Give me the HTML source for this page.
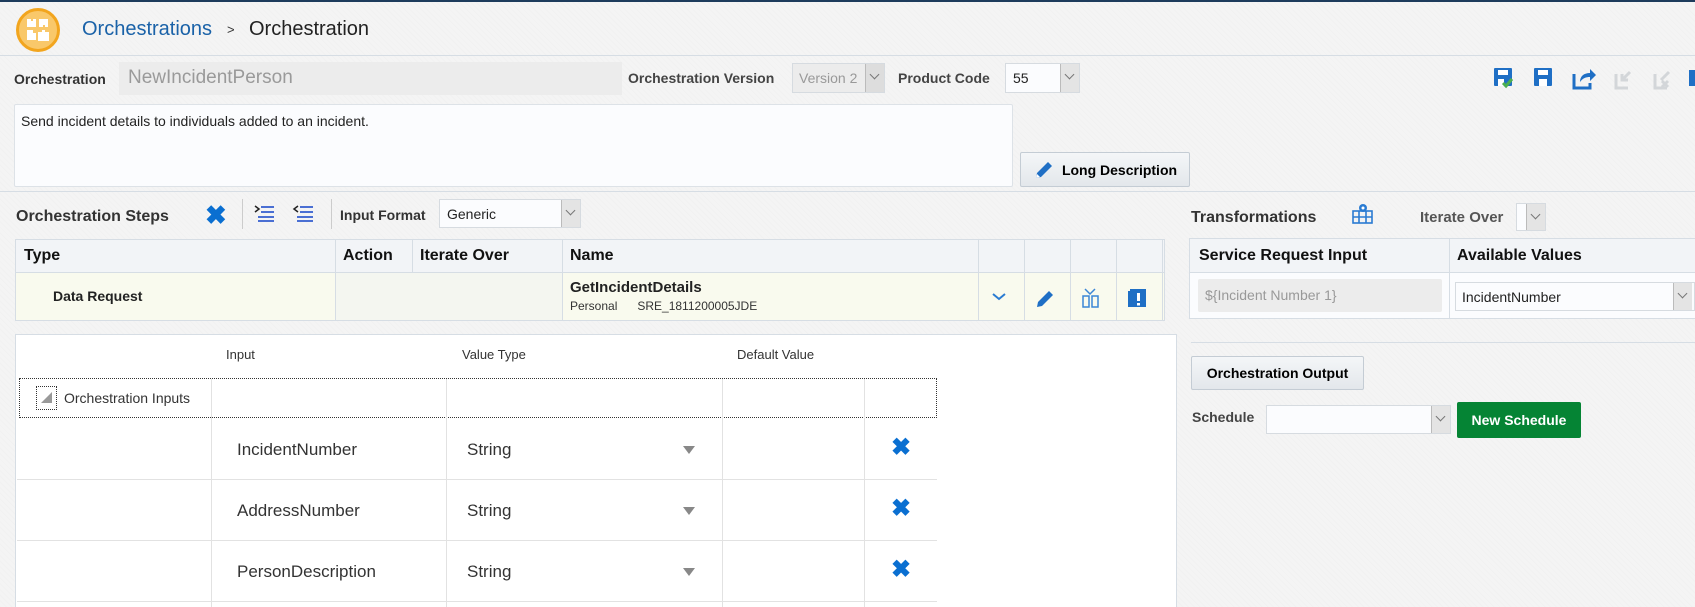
<!DOCTYPE html>
<html style="overflow:hidden;height:607px"><head><meta charset="utf-8"><style>
*{box-sizing:border-box;margin:0;padding:0}
body{width:1695px;height:607px;overflow:hidden;background:#f4f4f4;font-family:"Liberation Sans",Arial,sans-serif;color:#333;position:relative;
background-image:repeating-linear-gradient(45deg,rgba(0,0,0,0.012) 0 1px,transparent 1px 4px)}
.a{position:absolute}
.b{font-weight:bold}
.sel{position:absolute;background:#fbfcfe;border:1px solid #d6dbe0;font-size:14px}
.arr{position:absolute;right:0;top:0;bottom:0;width:19px;background:#e4e4e4;border-left:1px solid #bbb}
.arr:after{content:"";position:absolute;left:5px;top:7px;width:6px;height:6px;border-right:1px solid #777;border-bottom:1px solid #777;transform:rotate(45deg)}
.btn{position:absolute;background:linear-gradient(#f4f6f8,#e3e7eb);border:1px solid #c4ccd4;border-radius:2px;font-weight:bold;font-size:14px;color:#000;display:flex;align-items:center;justify-content:center}
.hl{position:absolute;height:1px;background:#d6dde4}
.vl{position:absolute;width:1px;background:#d6dde4}
.x{position:absolute;color:#0a6fd1;font-weight:bold;font-size:24px;line-height:24px}
</style></head><body>
<div class="a" style="left:0;top:0;width:1695px;height:2px;background:#1d3b5c"></div>
<!-- logo -->
<div class="a" style="left:16px;top:8px;width:44px;height:44px;border-radius:50%;background:#f9c86a;border:3px solid #f2a51e"></div>
<svg class="a" style="left:26px;top:18px" width="24" height="24" viewBox="0 0 24 24" fill="#fff"><path d="M1 1h4v2h2V1h3v8H1z"/><path d="M13 1h9v8h-3v-2h-2v2h-4z"/><path d="M1 12h6v3h3v7H1z"/><path d="M12 14h4v-2h3v2h4v9H12z"/></svg>
<div class="a" style="left:82px;top:18px;font-size:20px;color:#1a62a8">Orchestrations</div>
<div class="a" style="left:227px;top:22px;font-size:13px;color:#333">&gt;</div>
<div class="a" style="left:249px;top:18px;font-size:20px;color:#222">Orchestration</div>
<div class="hl" style="left:0;top:55px;width:1695px"></div>
<!-- row 1 -->
<div class="a b" style="left:14px;top:71px;font-size:14px;color:#333">Orchestration</div>
<div class="a" style="left:119px;top:62px;width:503px;height:33px;background:#ececec;font-size:19px;color:#9a9a9a;padding:5px 9px">NewIncidentPerson</div>
<div class="a b" style="left:628px;top:70px;font-size:14px;color:#444">Orchestration Version</div>
<div class="sel" style="left:792px;top:63px;width:93px;height:30px;background:#ececec;color:#999;padding:6px 6px">Version 2<div class="arr" style="background:#ddd"></div></div>
<div class="a b" style="left:898px;top:70px;font-size:14px;color:#444">Product Code</div>
<div class="sel" style="left:1005px;top:63px;width:75px;height:30px;padding:6px 7px;color:#222">55<div class="arr"></div></div>
<!-- toolbar icons -->
<svg class="a" style="left:1492px;top:66px" width="203" height="24" viewBox="0 0 203 24">
<g fill="#1f6fc5"><rect x="2" y="2" width="18" height="18" rx="1"/><rect x="42" y="2" width="18" height="18" rx="1"/></g>
<g fill="#fff"><rect x="6" y="4" width="10" height="5"/><rect x="46" y="4" width="10" height="5"/><rect x="47" y="13" width="8" height="7"/><rect x="6" y="13" width="6" height="7"/></g>
<path d="M11 17l3 3 6-7" stroke="#4caf50" stroke-width="3" fill="none"/>
<path d="M82 8v14h16v-5" stroke="#1f6fc5" stroke-width="3" fill="none"/><path d="M88 16c0-6 4-9 10-9v-4l6 6-6 6v-4c-4 0-7 1-10 5z" fill="#1f6fc5"/>
<path d="M124 8v14h12" stroke="#d3d6d9" stroke-width="3" fill="none"/><path d="M130 14l8-8M130 8v6h6" stroke="#d3d6d9" stroke-width="3" fill="none"/>
<path d="M163 8v14h12" stroke="#d3d6d9" stroke-width="3" fill="none"/><path d="M169 14l8-8M170 15l6 6M176 15l-6 6" stroke="#d3d6d9" stroke-width="3" fill="none"/>
<rect x="197" y="4" width="6" height="16" fill="#1f6fc5"/>
</svg>
<!-- textarea -->
<div class="a" style="left:14px;top:104px;width:999px;height:83px;background:#fbfcfe;border:1px solid #dde2e7;border-radius:2px;font-size:14px;color:#222;padding:8px 6px">Send incident details to individuals added to an incident.</div>
<div class="btn" style="left:1020px;top:152px;width:170px;height:35px"><svg width="22" height="22" viewBox="0 0 22 22" style="margin-right:7px"><path d="M3 19l1-5 11-11 4 4-11 11z" fill="#1f6fc5"/><path d="M3 19l1-4 3 3z" fill="#fff"/></svg>Long Description</div>
<div class="hl" style="left:0;top:191px;width:1695px"></div>
<!-- Steps toolbar -->
<div class="a b" style="left:16px;top:208px;font-size:16px;color:#333">Orchestration Steps</div>
<div class="x" style="left:205px;top:203px;font-size:26px">✖</div>
<div class="vl" style="left:242px;top:199px;height:30px;background:#ccc"></div>
<svg class="a" style="left:254px;top:204px" width="60" height="18" viewBox="0 0 60 18"><g stroke="#4a6fd3" stroke-width="2"><path d="M7 3h13M7 8h13M4 13h16M4 17h16"/><path d="M46 3h13M46 8h13M43 13h16M43 17h16"/></g><path d="M1 2l4 3-4 3" stroke="#222" stroke-width="1.5" fill="none"/><path d="M44 2l-4 3 4 3" stroke="#222" stroke-width="1.5" fill="none"/></svg>
<div class="vl" style="left:331px;top:199px;height:30px;background:#ccc"></div>
<div class="a b" style="left:340px;top:207px;font-size:14px;color:#333">Input Format</div>
<div class="sel" style="left:439px;top:199px;width:142px;height:29px;padding:6px 7px;color:#222">Generic<div class="arr"></div></div>
<!-- steps table -->
<div class="a" style="left:15px;top:239px;width:1150px;height:82px;border:1px solid #d6dde4;background:#fbfcfe"></div>
<div class="a" style="left:16px;top:240px;width:1148px;height:32px;background:#f2f4f7"></div>
<div class="a" style="left:16px;top:272px;width:1148px;height:48px;background:#f9faee"></div>
<div class="hl" style="left:16px;top:272px;width:1148px"></div>
<div class="vl" style="left:335px;top:240px;height:80px"></div>
<div class="vl" style="left:412px;top:240px;height:80px"></div>
<div class="vl" style="left:562px;top:240px;height:80px"></div>
<div class="vl" style="left:978px;top:240px;height:80px"></div>
<div class="vl" style="left:1024px;top:240px;height:80px"></div>
<div class="vl" style="left:1070px;top:240px;height:80px"></div>
<div class="vl" style="left:1116px;top:240px;height:80px"></div>
<div class="vl" style="left:1162px;top:240px;height:80px"></div>
<div class="a" style="left:336px;top:273px;width:226px;height:47px;background:#f4f6f0"></div>
<div class="a b" style="left:24px;top:247px;font-size:16px;color:#111">Type</div>
<div class="a b" style="left:343px;top:247px;font-size:16px;color:#111">Action</div>
<div class="a b" style="left:420px;top:247px;font-size:16px;color:#111">Iterate Over</div>
<div class="a b" style="left:570px;top:247px;font-size:16px;color:#111">Name</div>
<div class="a b" style="left:53px;top:288px;font-size:14px;color:#222">Data Request</div>
<div class="a b" style="left:570px;top:279px;font-size:15px;color:#222">GetIncidentDetails</div>
<div class="a" style="left:570px;top:299px;font-size:12px;color:#333">Personal&nbsp;&nbsp;&nbsp;&nbsp;&nbsp;&nbsp;SRE_1811200005JDE</div>
<svg class="a" style="left:990px;top:287px" width="170" height="22" viewBox="0 0 170 22">
<path d="M3 7l6 5 6-5" stroke="#2a7bd2" stroke-width="2" fill="none"/>
<path d="M47 20l1-5 11-11 4 4-11 11z" fill="#1f6fc5"/>
<g fill="none" stroke="#3b86d6" stroke-width="1.5"><rect x="93" y="9" width="6" height="11"/><rect x="102" y="9" width="6" height="11"/><path d="M95 2l5 5 5-5"/></g>
<rect x="140" y="2" width="16" height="18" fill="#1f6fc5"/><rect x="138" y="4" width="4" height="16" fill="#1f6fc5"/><rect x="147" y="6" width="3" height="8" fill="#fff"/><rect x="147" y="16" width="3" height="2.5" fill="#fff"/>
</svg>
<!-- lower left panel -->
<div class="a" style="left:15px;top:334px;width:1162px;height:273px;background:#fff;border:1px solid #d6dde4;border-bottom:none"></div>
<div class="a" style="left:226px;top:347px;font-size:13px;color:#333">Input</div>
<div class="a" style="left:462px;top:347px;font-size:13px;color:#333">Value Type</div>
<div class="a" style="left:737px;top:347px;font-size:13px;color:#333">Default Value</div>
<div class="a" style="left:19px;top:378px;width:918px;height:40px;border:1px dotted #333"></div>
<div class="a" style="left:36px;top:386px;width:21px;height:24px;border:1px dotted #333"></div>
<div class="a" style="left:41px;top:392px;width:0;height:0;border-left:11px solid transparent;border-bottom:11px solid #999"></div>
<div class="a" style="left:64px;top:390px;font-size:14px;color:#333">Orchestration Inputs</div>
<div class="vl" style="left:211px;top:379px;height:228px;background:#e2e2e2"></div>
<div class="vl" style="left:446px;top:379px;height:228px;background:#e2e2e2"></div>
<div class="vl" style="left:722px;top:379px;height:228px;background:#e2e2e2"></div>
<div class="vl" style="left:864px;top:379px;height:228px;background:#e2e2e2"></div>
<div class="hl" style="left:17px;top:479px;width:920px;background:#e2e2e2"></div>
<div class="hl" style="left:17px;top:540px;width:920px;background:#e2e2e2"></div>
<div class="hl" style="left:17px;top:601px;width:920px;background:#e2e2e2"></div>
<div class="a" style="left:237px;top:440px;font-size:17px;color:#333">IncidentNumber</div>
<div class="a" style="left:237px;top:501px;font-size:17px;color:#333">AddressNumber</div>
<div class="a" style="left:237px;top:562px;font-size:17px;color:#333">PersonDescription</div>
<div class="a" style="left:467px;top:440px;font-size:17px;color:#333">String</div>
<div class="a" style="left:467px;top:501px;font-size:17px;color:#333">String</div>
<div class="a" style="left:467px;top:562px;font-size:17px;color:#333">String</div>
<div class="a" style="left:683px;top:446px;border-left:6px solid transparent;border-right:6px solid transparent;border-top:8px solid #888"></div>
<div class="a" style="left:683px;top:507px;border-left:6px solid transparent;border-right:6px solid transparent;border-top:8px solid #888"></div>
<div class="a" style="left:683px;top:568px;border-left:6px solid transparent;border-right:6px solid transparent;border-top:8px solid #888"></div>
<div class="x" style="left:891px;top:436px">✖</div>
<div class="x" style="left:891px;top:497px">✖</div>
<div class="x" style="left:891px;top:558px">✖</div>
<!-- right panel -->
<div class="a b" style="left:1191px;top:209px;font-size:16px;color:#333">Transformations</div>
<svg class="a" style="left:1352px;top:203px" width="22" height="22" viewBox="0 0 22 22"><g fill="none" stroke="#2a7bd2" stroke-width="1.6"><rect x="1" y="8" width="19" height="12"/><path d="M1 14h19M7 8v12M14 8v12"/></g><circle cx="11" cy="5" r="4" fill="#2a7bd2"/><circle cx="11" cy="5" r="1.5" fill="#fff"/></svg>
<div class="a b" style="left:1420px;top:209px;font-size:15px;color:#555">Iterate Over</div>
<div class="sel" style="left:1516px;top:203px;width:30px;height:28px"><div class="arr"></div></div>
<div class="a" style="left:1189px;top:238px;width:506px;height:81px;border:1px solid #d6dde4;border-right:none;background:#fbfcfe"></div>
<div class="a" style="left:1190px;top:239px;width:505px;height:33px;background:#f2f4f7"></div>
<div class="hl" style="left:1190px;top:272px;width:505px"></div>
<div class="vl" style="left:1449px;top:239px;height:80px"></div>
<div class="a b" style="left:1199px;top:247px;font-size:16px;color:#111">Service Request Input</div>
<div class="a b" style="left:1457px;top:247px;font-size:16px;color:#111">Available Values</div>
<div class="a" style="left:1198px;top:279px;width:244px;height:33px;background:#ececec;border-radius:2px;font-size:14px;color:#999;padding:8px 7px">${Incident Number 1}</div>
<div class="sel" style="left:1455px;top:282px;width:240px;height:29px;padding:6px 6px;color:#222">IncidentNumber<div class="arr" style="right:2px"></div></div>
<div class="hl" style="left:1191px;top:342px;width:504px"></div>
<div class="btn" style="left:1191px;top:356px;width:173px;height:34px">Orchestration Output</div>
<div class="a b" style="left:1192px;top:409px;font-size:14px;color:#444">Schedule</div>
<div class="sel" style="left:1266px;top:405px;width:185px;height:29px"><div class="arr"></div></div>
<div class="a b" style="left:1457px;top:402px;width:124px;height:36px;background:#058434;border-radius:2px;color:#fff;font-size:14px;display:flex;align-items:center;justify-content:center">New Schedule</div>
</body></html>
